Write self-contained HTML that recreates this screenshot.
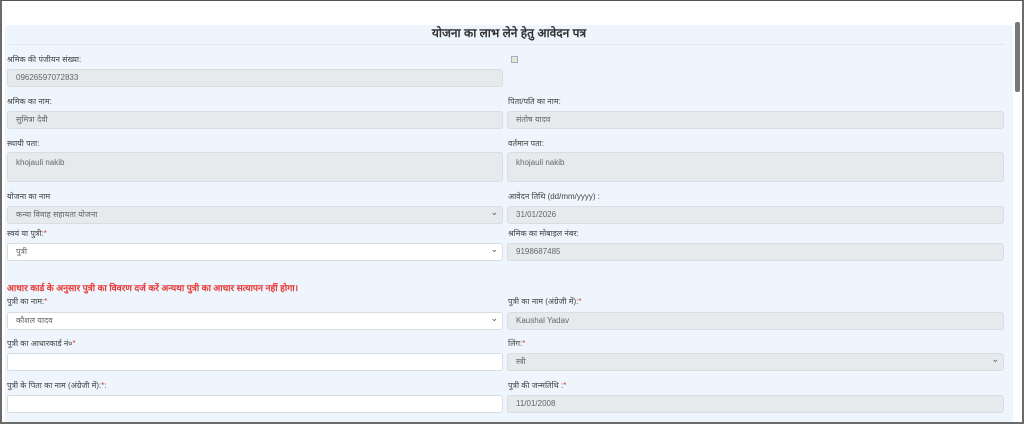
<!DOCTYPE html><html><head><meta charset="utf-8"><style>
*{box-sizing:border-box;margin:0;padding:0}
body{width:1024px;height:424px;overflow:hidden;background:#fff;font-family:"Liberation Sans","Noto Sans CJK SC",sans-serif;position:relative}
.frame{position:absolute;left:0;top:0;width:1024px;height:424px;border:2px solid #6b6b6b;border-top:1px solid #555}
.panel{position:absolute;left:5px;top:25px;width:1008px;height:397px;background:#eef5fc}
.title{position:absolute;left:0;width:1008px;top:-1px;text-align:center;font-weight:bold;font-size:12px;color:#333}
.hr{position:absolute;left:5px;top:19px;width:995px;height:1px;background:#e2e8ee}
.l{position:absolute;font-size:8px;color:#444}
.i{position:absolute;height:18px;border:1px solid #d8dde2;border-radius:3px;background:#e7eaed;font-size:8px;color:#666;padding:0 8px;line-height:15px}
.w{background:#fff}
.l.a{left:7px}.l.b{left:508px}
.i.a{left:7px;width:496px}.i.b{left:507px;width:497px}
.s::after{content:"⌄";position:absolute;right:4px;top:-2px;font-size:9px;color:#555}
.r{color:#e53935}
.sb{position:absolute;left:1015px;top:22px;width:5px;height:70px;background:#777;border-radius:2px}
.img{position:absolute;left:511px;top:56px;width:7px;height:7px;border:1px solid #aab;background:#dde8d8}
</style></head><body>
<div class="panel"><div class="title">योजना का लाभ लेने हेतु आवेदन पत्र</div><div class="hr"></div></div>
<div class="sb"></div>
<div class="l a" style="top:54px">श्रमिक की पंजीयन संख्या:</div>
<div class="i a" style="top:69px">09626597072833</div>
<div class="img"></div>
<div class="l a" style="top:96px">श्रमिक का नाम:</div>
<div class="i a" style="top:111px">सुमित्रा देवी</div>
<div class="l b" style="top:96px">पिता/पति का नाम:</div>
<div class="i b" style="top:111px">संतोष यादव</div>
<div class="l a" style="top:138px">स्थायी पता:</div>
<div class="i a" style="top:152px;height:30px;padding-top:2px">khojauli nakib</div>
<div class="l b" style="top:138px">वर्तमान पता:</div>
<div class="i b" style="top:152px;height:30px;padding-top:2px">khojauli nakib</div>
<div class="l a" style="top:191px">योजना का नाम</div>
<div class="i a s" style="top:206px">कन्या विवाह सहायता योजना</div>
<div class="l b" style="top:191px">आवेदन तिथि (dd/mm/yyyy) :</div>
<div class="i b" style="top:206px">31/01/2026</div>
<div class="l a" style="top:228px">स्वयं या पुत्री:<span class="r">*</span></div>
<div class="i a s w" style="top:243px">पुत्री</div>
<div class="l b" style="top:228px">श्रमिक का मोबाइल नंबर:</div>
<div class="i b" style="top:243px">9198687485</div>
<div class="l a r" style="top:281px;font-weight:bold;font-size:9px">आधार कार्ड के अनुसार पुत्री का विवरण दर्ज करें अन्यथा पुत्री का आधार सत्यापन नहीं होगा।</div>
<div class="l a" style="top:296px">पुत्री का नाम:<span class="r">*</span></div>
<div class="i a s w" style="top:312px">कौशल यादव</div>
<div class="l b" style="top:296px">पुत्री का नाम (अंग्रेजी में):<span class="r">*</span></div>
<div class="i b" style="top:312px">Kaushal Yadav</div>
<div class="l a" style="top:338px">पुत्री का आधारकार्ड नं०<span class="r">*</span></div>
<div class="i a w" style="top:353px"></div>
<div class="l b" style="top:338px">लिंग:<span class="r">*</span></div>
<div class="i b s" style="top:353px">स्त्री</div>
<div class="l a" style="top:380px">पुत्री के पिता का नाम (अंग्रेजी में):<span class="r">*</span>:</div>
<div class="i a w" style="top:395px"></div>
<div class="l b" style="top:380px">पुत्री की जन्मतिथि :<span class="r">*</span></div>
<div class="i b" style="top:395px">11/01/2008</div>
<div class="frame"></div>
</body></html>
